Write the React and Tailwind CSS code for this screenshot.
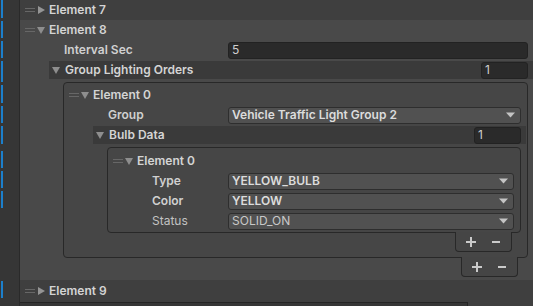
import React from "react";

// rows that carry the blue "overridden" mark in the gutter: [top, bottom]
const marks = [
  [0, 18], [21, 38], [41, 58], [61, 82], [85, 103], [106, 123],
  [126, 144], [151, 168], [171, 188], [191, 208], [281, 298],
];

const Handle = () => (
  <div className="flex w-[10px] shrink-0 flex-col gap-[2px]">
    <div className="h-px bg-[#676767]" />
    <div className="h-px bg-[#676767]" />
  </div>
);

const Tri = ({ open }) => (
  <svg width="8" height="8" viewBox="0 0 8 8" className="shrink-0">
    {open ? (
      <polygon points="0,1 8,1 4,8" fill="#8e8e8e" />
    ) : (
      <polygon points="1,0 8,4 1,8" fill="#959595" />
    )}
  </svg>
);

const Arrow = () => (
  <svg width="9" height="6" viewBox="0 0 9 6" className="shrink-0">
    <polygon points="0,0.5 9,0.5 4.5,5.5" fill="#c4c4c4" />
  </svg>
);

const ElementRow = ({ label, open, className = "" }) => (
  <div className={`flex h-[20px] shrink-0 items-center ${className}`}>
    <Handle />
    <div className="ml-[2px]">
      <Tri open={open} />
    </div>
    <span className="ml-[4px] font-semibold text-[#d4d4d4]">{label}</span>
  </div>
);

const Dropdown = ({ value, bold = true }) => (
  <div className="flex h-[17px] flex-1 items-center justify-between rounded-[3px] border border-[#2e2e2e] bg-[#515151] pl-[3px] pr-[5px]">
    <span className={bold ? "font-semibold text-[#dcdcdc]" : "text-[#c8c8c8]"}>{value}</span>
    <Arrow />
  </div>
);

const IntField = ({ value, className = "" }) => (
  <div className={`flex h-[17px] items-center rounded-[3px] border border-[#222222] bg-[#2a2a2a] pl-[3px] text-[#cfcfcf] ${className}`}>
    {value}
  </div>
);

const Header = ({ label, value }) => (
  <div className="flex h-[20px] shrink-0 py-px pl-[29px]">
    <div className="flex flex-1 items-center bg-[#3a3a3a] pl-[3px] pr-[5px]">
      <Tri open />
      <span className="ml-[5px] flex-1 font-semibold text-[#d4d4d4]">{label}</span>
      <IntField value={value} className="w-[47px]" />
    </div>
  </div>
);

const Footer = () => (
  <div className="mr-[15px] -mt-px flex h-[20px] w-[57px] items-center gap-[16px] self-end rounded-b-[4px] border border-t-0 border-[#282828] bg-[#454545] pl-[10px]">
    <svg width="10" height="10" viewBox="0 0 10 10">
      <rect x="4" y="0" width="2" height="10" fill="#cacaca" />
      <rect x="0" y="4" width="10" height="2" fill="#cacaca" />
    </svg>
    <svg width="8" height="10" viewBox="0 0 8 10">
      <rect x="0" y="4" width="8" height="2" fill="#cacaca" />
    </svg>
  </div>
);

const Gutter = () => (
  <div className="flex w-[20px] shrink-0 flex-col border-r border-[#2a2a2a] bg-[#363636] pl-px">
    {marks.map(([a, b], i) => (
      <div
        key={i}
        className="w-[2px] shrink-0 bg-[#1c7fcb]"
        style={{ marginTop: a - (i ? marks[i - 1][1] : 0), height: b - a }}
      />
    ))}
  </div>
);

export default function App() {
  return (
    <div className="flex h-[306px] w-[533px] overflow-hidden bg-[#363636] font-['Inter',sans-serif] text-[12px] leading-none">
      <Gutter />
      <div className="flex flex-1 flex-col">
        <ElementRow label="Element 7" className="bg-[#3f3f3f] pl-[5px]" />

        <div className="flex flex-col bg-[#494949] pb-[3px]">
          <ElementRow label="Element 8" open className="pl-[5px]" />

          <div className="flex h-[20px] items-center pr-[5px]">
            <span className="w-[208px] shrink-0 pl-[44px] font-semibold text-[#d0d0d0]">Interval Sec</span>
            <IntField value="5" className="flex-1" />
          </div>

          <Header label="Group Lighting Orders" value="1" />

          <div className="ml-[43px] mr-[5px] mt-[2px] flex flex-col rounded-[4px] border border-[#282828] bg-[#464646] pb-[5px] pt-[2px]">
            <ElementRow label="Element 0" open className="pl-[5px]" />
            <div className="flex h-[20px] items-center pr-[6px]">
              <span className="w-[164px] shrink-0 pl-[44px] font-semibold text-[#d0d0d0]">Group</span>
              <Dropdown value="Vehicle Traffic Light Group 2" />
            </div>
            <div className="pr-px">
              <Header label="Bulb Data" value="1" />
            </div>

            <div className="ml-[43px] mr-[6px] mt-[2px] flex flex-col rounded-[4px] border border-[#282828] bg-[#464646] pb-px pt-[3px]">
              <ElementRow label="Element 0" open className="pl-[5px]" />
              <div className="flex h-[20px] items-center pr-[6px]">
                <span className="w-[120px] shrink-0 pl-[44px] font-semibold text-[#d0d0d0]">Type</span>
                <Dropdown value="YELLOW_BULB" />
              </div>
              <div className="flex h-[20px] items-center pr-[6px]">
                <span className="w-[120px] shrink-0 pl-[44px] font-semibold text-[#d0d0d0]">Color</span>
                <Dropdown value="YELLOW" />
              </div>
              <div className="flex h-[20px] items-center pr-[6px]">
                <span className="w-[120px] shrink-0 pl-[44px] text-[#c2c2c2]">Status</span>
                <Dropdown value="SOLID_ON" bold={false} />
              </div>
            </div>
            <Footer />
          </div>
          <Footer />
        </div>

        <div className="flex h-[22px] shrink-0 items-center bg-[#3f3f3f] pl-[5px]">
          <ElementRow label="Element 9" />
        </div>

        <div className="flex h-[4px] shrink-0">
          <div className="w-[447px] rounded-bl-[3px] border-t border-[#252525]" />
          <div className="flex-1 border-l border-[#252525] bg-[#3f3f3f]" />
        </div>
      </div>
    </div>
  );
}
